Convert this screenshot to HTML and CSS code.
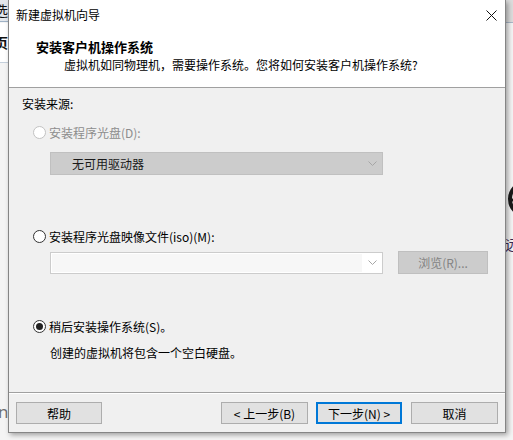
FILE: index.html
```html
<!DOCTYPE html>
<html lang="zh-CN">
<head>
<meta charset="utf-8">
<title>新建虚拟机向导</title>
<link rel="stylesheet" href="styles.css">
</head>
<body>
<div class="desktop">
  <div class="backdrop">
    <div class="bg-toolbar-left"><span class="bg-char-top">选</span></div>
    <div class="bg-tab-left"><span class="bg-char-tab">页</span></div>
    <span class="bg-char-n">n</span>
    <div class="bg-toolbar-right"></div>
    <svg class="bg-icon" width="40" height="44" viewBox="0 0 40 44">
      <circle cx="20" cy="22" r="17" fill="none" stroke="#1a1a1a" stroke-width="4"/>
      <line x1="2" y1="23" x2="38" y2="23" stroke="#1a1a1a" stroke-width="3"/>
    </svg>
    <span class="bg-char-right">远</span>
  </div>

  <div class="dialog">
    <div class="top">
      <div class="titlebar">
        <span class="title">新建虚拟机向导</span>
        <svg class="close" width="11" height="11" viewBox="0 0 11 11">
          <path d="M0.5 0.5 L10.5 10.5 M10.5 0.5 L0.5 10.5" stroke="#111" stroke-width="1" fill="none"/>
        </svg>
      </div>
      <div class="header">
        <div class="h-title">安装客户机操作系统</div>
        <div class="h-sub">虚拟机如同物理机，需要操作系统。您将如何安装客户机操作系统?</div>
      </div>
    </div>

    <div class="body">
      <div class="group-label">安装来源:</div>

      <div class="radio disabled"><span class="circle"></span><span>安装程序光盘(D):</span></div>
      <div class="combo disabled">
        <span class="combo-text">无可用驱动器</span>
        <svg class="chev" width="9" height="5" viewBox="0 0 9 5"><polyline points="0.5,0.5 4.5,4.5 8.5,0.5" fill="none" stroke="#a6a6a6" stroke-width="1"/></svg>
      </div>

      <div class="radio radio-iso"><span class="circle"></span><span>安装程序光盘映像文件(iso)(M):</span></div>
      <div class="iso-row">
        <div class="edit-combo">
          <span class="edit"></span>
          <span class="edit-arrow">
            <svg width="9" height="5" viewBox="0 0 9 5"><polyline points="0.5,0.5 4.5,4.5 8.5,0.5" fill="none" stroke="#a6a6a6" stroke-width="1"/></svg>
          </span>
        </div>
        <div class="btn btn-disabled">浏览(R)...</div>
      </div>

      <div class="radio radio-later checked"><span class="circle"><span class="dot"></span></span><span>稍后安装操作系统(S)。</span></div>
      <div class="note">创建的虚拟机将包含一个空白硬盘。</div>
    </div>

    <div class="footer">
      <div class="btn btn-help">帮助</div>
      <div class="nav">
        <div class="btn btn-back">&lt; 上一步(B)</div>
        <div class="btn btn-next">下一步(N) &gt;</div>
        <div class="btn btn-cancel">取消</div>
      </div>
    </div>
  </div>
</div>
</body>
</html>
```

FILE: styles.css
```css
* { box-sizing: border-box; }

html, body {
  margin: 0;
  padding: 0;
}

body {
  width: 513px;
  height: 440px;
  overflow: hidden;
  font-family: "Noto Sans CJK SC", "Noto Sans", sans-serif;
  font-size: 12px;
  color: #000;
  background: #f4f4f4;
}

.desktop {
  position: relative;
  width: 513px;
  height: 440px;
  overflow: hidden;
}

/* ---------- window behind the dialog ---------- */
.backdrop {
  position: absolute;
  inset: 0;
  background: #f4f4f4;
}

.bg-toolbar-left {
  position: absolute;
  left: 0;
  top: 0;
  width: 20px;
  height: 22px;
  background: #e3e7ec;
  border-bottom: 1px solid #9fb2c6;
}

.bg-char-top {
  position: absolute;
  left: -6px;
  top: 1px;
  font-size: 14px;
  line-height: 18px;
  color: #111;
}

.bg-tab-left {
  position: absolute;
  left: 0;
  top: 23px;
  width: 20px;
  height: 40px;
  background: #ffffff;
  border-bottom: 1px solid #c5d0dc;
}

.bg-char-tab {
  position: absolute;
  left: -6px;
  top: 10px;
  font-size: 14px;
  font-weight: bold;
  line-height: 18px;
  color: #111;
}

.bg-char-n {
  position: absolute;
  left: -2px;
  top: 402px;
  font-family: "Open Sans", sans-serif;
  font-size: 17px;
  line-height: 20px;
  color: #6e6e6e;
}

.bg-toolbar-right {
  position: absolute;
  left: 490px;
  top: 0;
  width: 23px;
  height: 23px;
  background: #dcdcdc;
  border-bottom: 1px solid #a9b7c7;
}

.bg-icon {
  position: absolute;
  left: 507px;
  top: 177px;
}

.bg-char-right {
  position: absolute;
  left: 505px;
  top: 236px;
  font-size: 14px;
  line-height: 17px;
  color: #3a2a55;
}

/* ---------- dialog window ---------- */
.dialog {
  position: absolute;
  left: 8px;
  top: 0;
  width: 498px;
  height: 433px;
  background: #f0f0f0;
  border: 1px solid #858585;
  border-top: none;
  box-shadow: 2px 2px 5px rgba(0, 0, 0, 0.35);
  display: flex;
  flex-direction: column;
}

.top {
  height: 88px;
  background: #ffffff;
  border-bottom: 1px solid #a0a0a0;
  flex: none;
}

.titlebar {
  height: 30px;
  display: flex;
  align-items: center;
  justify-content: space-between;
  padding-left: 7px;
  padding-right: 8px;
}

.title {
  line-height: 30px;
  color: #000;
}

.close {
  display: block;
}

.header {
  padding: 8px 0 14px 27px;
}

.h-title {
  font-size: 13px;
  font-weight: bold;
  line-height: 18px;
}

.h-sub {
  padding-left: 28px;
  line-height: 17px;
}

/* ---------- body ---------- */
.body {
  flex: 1;
  padding: 7px 0 0 13px;
}

.group-label {
  line-height: 17px;
}

.radio {
  display: flex;
  align-items: center;
  height: 17px;
  margin-left: 11px;
  margin-top: 12px;
  line-height: 17px;
}

.radio .circle {
  width: 13px;
  height: 13px;
  border-radius: 50%;
  border: 1px solid #333333;
  background: #ffffff;
  margin-right: 3px;
  display: flex;
  align-items: center;
  justify-content: center;
  flex: none;
}

.radio.disabled {
  color: #8d8d8d;
}

.radio.disabled .circle {
  border-color: #c2c2c2;
}

.radio .dot {
  width: 7px;
  height: 7px;
  border-radius: 50%;
  background: #222222;
}

.radio-iso {
  margin-top: 53px;
}

.radio-later {
  margin-top: 44px;
}

.combo {
  margin-left: 28px;
  margin-top: 11px;
  width: 333px;
  height: 23px;
  background: #cccccc;
  border: 1px solid #c0c0c0;
  display: flex;
  align-items: center;
  justify-content: space-between;
  padding: 0 5px 0 21px;
}

.combo-text {
  line-height: 17px;
  color: #1a1a1a;
}

.chev {
  display: block;
}

.iso-row {
  margin-left: 28px;
  margin-top: 6px;
  height: 23px;
  display: flex;
  align-items: center;
}

.edit-combo {
  width: 333px;
  height: 22px;
  border: 1px solid #cccccc;
  background: #ffffff;
  display: flex;
}

.edit {
  flex: 1;
  margin: 1px 0 1px 1px;
  background: #f7f7f7;
}

.edit-arrow {
  width: 20px;
  display: flex;
  align-items: center;
  justify-content: center;
}

.edit-arrow svg {
  display: block;
}

.note {
  margin-left: 28px;
  margin-top: 9px;
  line-height: 17px;
}

/* ---------- buttons ---------- */
.btn {
  height: 22px;
  border: 1px solid #adadad;
  background: #e1e1e1;
  display: flex;
  align-items: center;
  justify-content: center;
  line-height: 17px;
  color: #000;
}

.btn-disabled {
  width: 90px;
  height: 23px;
  margin-left: 15px;
  background: #cccccc;
  border-color: #bfbfbf;
  color: #838383;
}

.footer {
  flex: none;
  height: 40px;
  border-top: 1px solid #a0a0a0;
  box-shadow: inset 0 1px 0 #ffffff;
  padding: 9px 7px 8px 7px;
  display: flex;
  justify-content: space-between;
}

.btn-help {
  width: 86px;
}

.nav {
  display: flex;
}

.btn-back {
  width: 87px;
  margin-right: 8px;
}

.btn-next {
  width: 86px;
  margin-right: 9px;
  border: 2px solid #0078d7;
}

.btn-cancel {
  width: 87px;
}
```
